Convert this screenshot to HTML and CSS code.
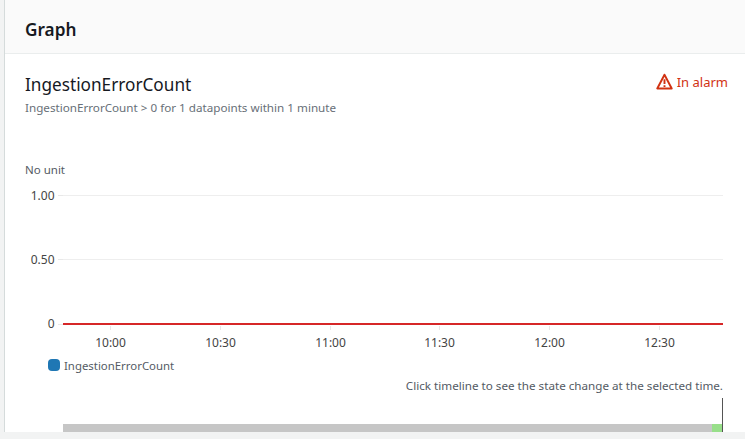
FILE: index.html
```html
<!DOCTYPE html>
<html lang="en">
<head>
<meta charset="utf-8">
<title>Graph</title>
<link rel="stylesheet" href="styles.css">
</head>
<body>
<section class="card">
  <header class="card-header"><h2 class="card-title">Graph</h2></header>
  <div class="card-body">
    <div class="alarm-head">
      <div>
        <h3 class="alarm-name">IngestionErrorCount</h3>
        <p class="alarm-desc">IngestionErrorCount &gt; 0 for 1 datapoints within 1 minute</p>
      </div>
      <div class="status">
        <svg class="status-icon" viewBox="0 0 16 16" aria-hidden="true">
          <path class="warn-outline" d="M8 1.6 1.2 14.6h13.6Z"/>
          <path class="warn-mark" d="M8 5.8v4.6M8 11.5v1.6"/>
        </svg>
        <span>In alarm</span>
      </div>
    </div>
    <svg class="chart" viewBox="0 0 740 322" width="740" height="322" aria-label="Chart">
      <text class="unit" x="20" y="64">No unit</text>
      <line class="grid" x1="58" x2="718" y1="85.5" y2="85.5"/>
      <line class="grid" x1="58" x2="718" y1="149.5" y2="149.5"/>
      <line class="tick" x1="53" x2="58" y1="85.5" y2="85.5"/>
      <line class="tick" x1="53" x2="58" y1="149.5" y2="149.5"/>
      <line class="tick" x1="53" x2="58" y1="214.5" y2="214.5"/>
      <text class="ylabel" x="49.5" y="90">1.00</text>
      <text class="ylabel" x="49.5" y="154">0.50</text>
      <text class="ylabel" x="49.5" y="218">0</text>
      <line class="tick" x1="105.5" x2="105.5" y1="216" y2="220"/>
      <line class="tick" x1="215.5" x2="215.5" y1="216" y2="220"/>
      <line class="tick" x1="325.5" x2="325.5" y1="216" y2="220"/>
      <line class="tick" x1="434.5" x2="434.5" y1="216" y2="220"/>
      <line class="tick" x1="544.5" x2="544.5" y1="216" y2="220"/>
      <line class="tick" x1="654.5" x2="654.5" y1="216" y2="220"/>
      <rect class="series" x="58" y="213" width="660" height="2"/>
      <text class="xlabel" x="105.5" y="237">10:00</text>
      <text class="xlabel" x="215.5" y="237">10:30</text>
      <text class="xlabel" x="325.5" y="237">11:00</text>
      <text class="xlabel" x="434.5" y="237">11:30</text>
      <text class="xlabel" x="544.5" y="237">12:00</text>
      <text class="xlabel" x="654.5" y="237">12:30</text>
      <rect class="swatch" x="43" y="249" width="12" height="12" rx="4"/>
      <text class="legend" x="59" y="260">IngestionErrorCount</text>
      <text class="hint" x="718" y="280">Click timeline to see the state change at the selected time.</text>
      <rect class="timeline" x="58" y="314" width="649" height="8"/>
      <rect class="timeline-ok" x="707" y="314" width="10" height="8"/>
      <line class="cursor" x1="717.5" x2="717.5" y1="288" y2="322"/>
    </svg>
  </div>
</section>
</body>
</html>
```
FILE: styles.css
```css
* { box-sizing: border-box; }
html, body { margin: 0; padding: 0; }
body {
  width: 745px;
  height: 439px;
  overflow: hidden;
  background: #f2f3f3;
  font-family: "Noto Sans", "Open Sans", sans-serif;
  color: #16191f;
}
.card {
  margin-left: 4px;
  height: 432px;
  background: #fff;
  border-left: 1px solid #d5dbdb;
  overflow: hidden;
}
.card-header {
  height: 54px;
  padding: 19px 20px 0;
  background: #fafafa;
  border-bottom: 1px solid #eaeded;
}
.card-title {
  margin: 0;
  font-size: 17.2px;
  line-height: 22px;
  font-weight: 600;
}
.card-body { display: flex; flex-direction: column; }
.alarm-head {
  display: flex;
  justify-content: space-between;
  padding: 19px 17px 0 20px;
  height: 56px;
}
.alarm-name {
  margin: 0;
  font-size: 17.2px;
  line-height: 24px;
  font-weight: 400;
}
.alarm-desc {
  margin: 3px 0 0;
  font-size: 11.66px;
  line-height: 16px;
  color: #687078;
}
.status {
  display: flex;
  align-items: center;
  align-self: flex-start;
  gap: 4px;
  height: 20px;
  margin-top: -1px;
  font-size: 13px;
  color: #d13212;
}
.status-icon { width: 17px; height: 17px; margin-bottom: 2px; }
.warn-outline { fill: none; stroke: #d13212; stroke-width: 1.8; stroke-linejoin: round; }
.warn-mark { fill: none; stroke: #d13212; stroke-width: 1.8; }
.chart { display: block; font-family: "Noto Sans", "Open Sans", sans-serif; font-size: 11px; }
.chart text { fill: #545b64; }
.chart .unit { font-size: 11.5px; }
.chart .ylabel { text-anchor: end; fill: #444; font-size: 12px; }
.chart .xlabel { text-anchor: middle; fill: #444; font-size: 12px; }
.chart .legend { font-size: 11.4px; }
.grid { stroke: #eeeeee; stroke-width: 1; }
.tick { stroke: #e8e8e8; stroke-width: 1; }
.series { fill: #d62728; }
.swatch { fill: #1f77b4; }
.chart .hint { text-anchor: end; font-size: 11.66px; }
.timeline { fill: #c6c6c6; }
.timeline-ok { fill: #98df8a; }
.cursor { stroke: #555; stroke-width: 1; }
```
